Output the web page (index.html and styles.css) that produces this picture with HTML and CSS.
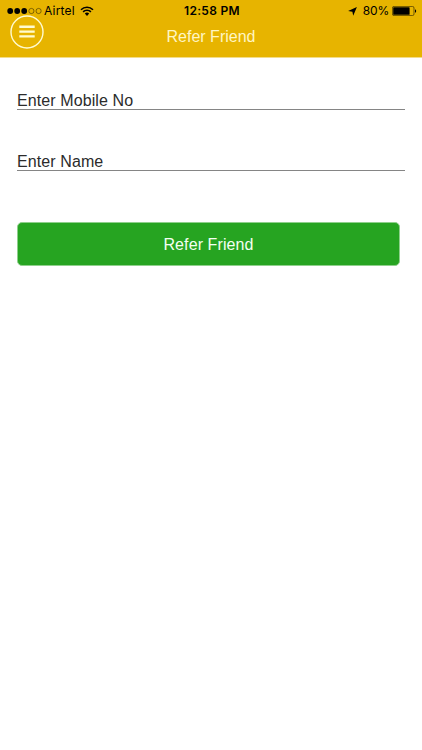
FILE: index.html
```html
<!DOCTYPE html>
<html lang="en">
<head>
    <meta charset="UTF-8">
    <meta name="viewport" content="width=device-width, initial-scale=1.0">
    <title>Refer Friend</title>
    <link rel="stylesheet" href="styles.css">
</head>
<body>

    <header class="header">
        <!-- Status bar -->
        <div class="status-bar">
            <div class="carrier">
                <svg width="36" height="8" viewBox="0 0 36 8">
                    <circle cx="3.2" cy="4" r="2.9"/>
                    <circle cx="10.2" cy="4" r="2.9"/>
                    <circle cx="17.2" cy="4" r="2.9"/>
                    <circle cx="24.4" cy="4" r="2.6" fill="none" stroke="#3a2d00" stroke-width=".6"/>
                    <circle cx="31.6" cy="4" r="2.6" fill="none" stroke="#3a2d00" stroke-width=".6"/>
                </svg>
                <span class="carrier-name">Airtel</span>
                <svg class="wifi" width="14" height="10" viewBox="0 0 14 10">
                    <path d="M1 3.7a8.6 8.6 0 0 1 12 0M3.1 5.9a5.6 5.6 0 0 1 7.8 0" fill="none" stroke="#000" stroke-width="1.6"/>
                    <path d="M4.8 7.6a3.2 3.2 0 0 1 4.4 0L7 9.9z"/>
                </svg>
            </div>
            <span class="clock">12:58 PM</span>
            <div class="battery">
                <svg width="9" height="9" viewBox="0 0 9 9">
                    <path d="M8.9.1L5.2 8.8 4.4 4.7.1 4z"/>
                </svg>
                <span class="percent">80%</span>
                <svg width="25" height="10" viewBox="0 0 25 10">
                    <rect x=".4" y=".4" width="21.6" height="9.2" rx="1.6" fill="none" stroke="#3a2d00" stroke-width=".7"/>
                    <rect x="1.2" y="1.2" width="16.4" height="7.6" rx=".6"/>
                    <path d="M23 3.2c1.6.5 1.6 3.1 0 3.6z"/>
                </svg>
            </div>
        </div>

        <!-- Title bar -->
        <div class="title-bar">
            <svg class="menu" width="34" height="34" viewBox="0 0 34 34">
                <circle cx="17" cy="17" r="16" fill="none" stroke="#fffbd0" stroke-width="1.4"/>
                <path d="M9.3 11.8h15.4M9.3 16.6h15.4M9.3 21.4h15.4" stroke="#fffbd0" stroke-width="2.4"/>
            </svg>
            <h1 class="title">Refer Friend</h1>
        </div>
    </header>

    <form class="refer-form">
        <div class="field">Enter Mobile No</div>
        <div class="field">Enter Name</div>
        <button type="button" class="refer-button">Refer Friend</button>
    </form>

</body>
</html>
```

FILE: styles.css
```css
body {
    margin: 0;
    background-color: #fff;
    font-family: "Liberation Sans", Arial, sans-serif;
}
.header {
    height: 57px;
    background-color: #e7b400;
    border-bottom: 1px solid #f3dc8a;
}
.status-bar {
    display: grid;
    grid-template-columns: 1fr auto 1fr;
    align-items: center;
    height: 15px;
    padding: 3px 5px 0 7px;
    box-sizing: border-box;
    font-family: Inter, sans-serif;
    font-size: 12px;
    line-height: 16px;
}
.status-bar svg {
    display: block;
}
.carrier {
    display: flex;
    align-items: center;
}
.carrier-name {
    margin-left: 1px;
    letter-spacing: 0.2px;
}
.wifi {
    margin-left: 5px;
}
.clock {
    font-weight: 600;
    letter-spacing: 0.3px;
}
.battery {
    display: flex;
    align-items: center;
    justify-content: flex-end;
}
.percent {
    margin: 0 3px 0 6px;
    letter-spacing: -0.2px;
}
.title-bar {
    display: grid;
    grid-template-columns: 1fr auto 1fr;
    height: 42px;
}
.menu {
    display: block;
    margin-left: 10px;
}
.title {
    margin: 0;
    color: #fff6c4;
    font-size: 16px;
    font-weight: normal;
    line-height: 43px;
}
.refer-form {
    padding: 27px 17px 0;
}
.field {
    height: 24px;
    margin-bottom: 36px;
    border-bottom: 1px solid #858585;
    color: #2b2b2b;
    font-size: 16px;
    letter-spacing: 0.1px;
    line-height: 31px;
}
.refer-button {
    display: block;
    width: 383px;
    height: 44px;
    margin-top: 51px;
    padding: 1px 0 0;
    border: 1px solid #8fd08c;
    border-radius: 5px;
    background-color: #26a421;
    color: #f4fff2;
    font-family: inherit;
    font-size: 16px;
    letter-spacing: 0.1px;
}
```
